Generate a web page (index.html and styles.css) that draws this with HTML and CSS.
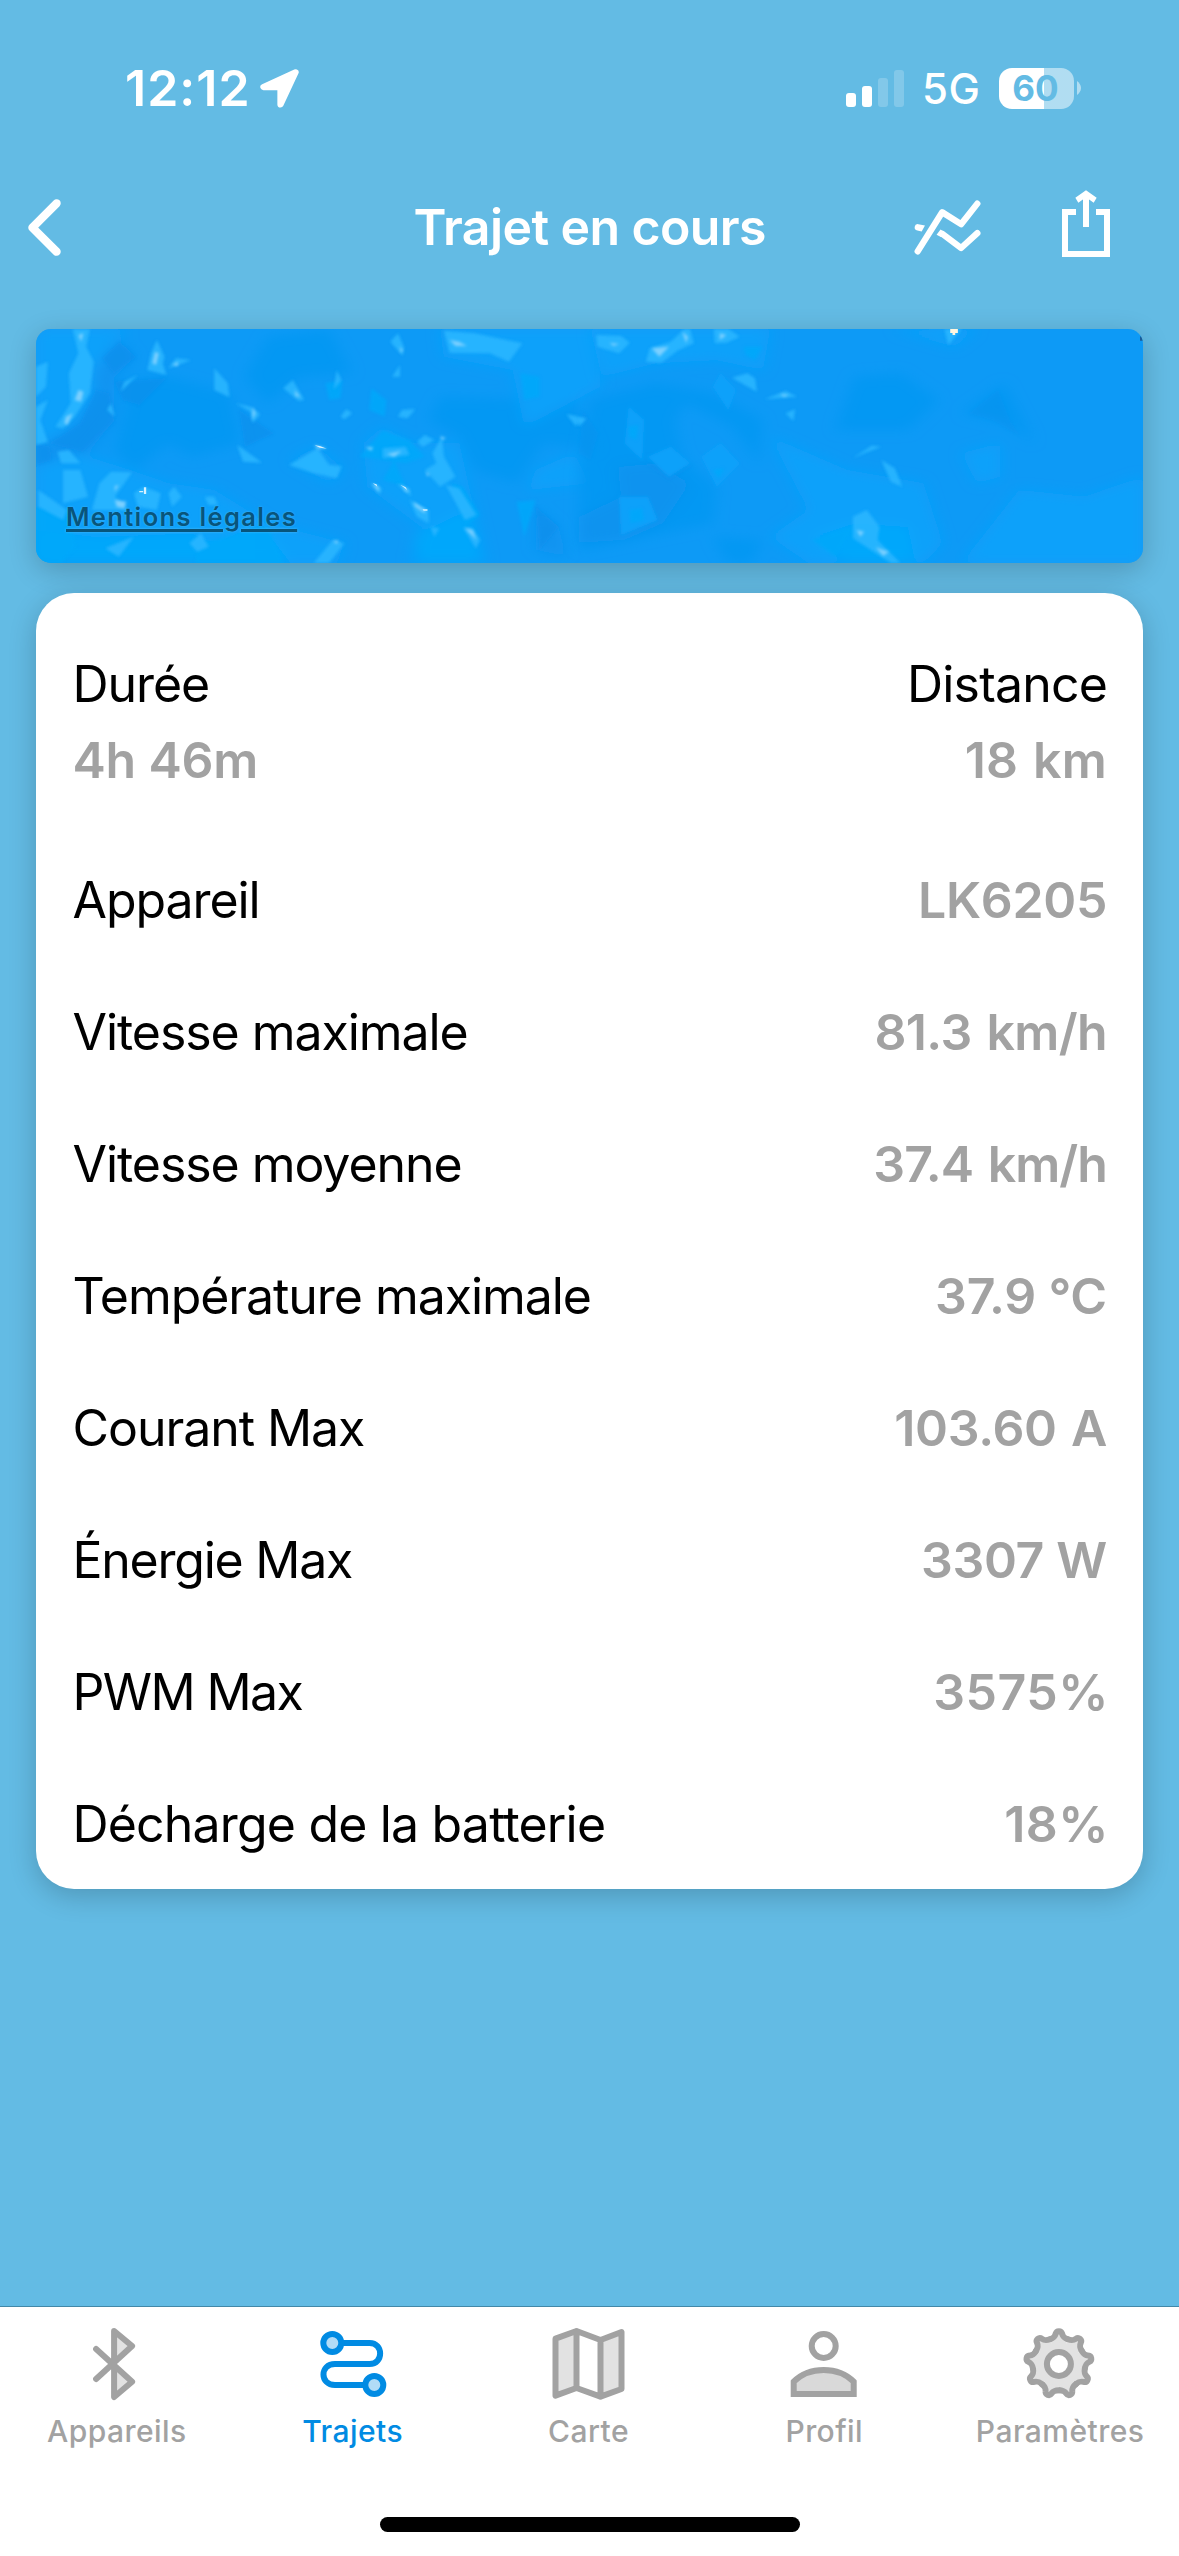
FILE: index.html
```html
<!DOCTYPE html>
<html lang="fr">
<head>
<meta charset="utf-8">
<title>Trajet en cours</title>
<link rel="stylesheet" href="styles.css">
</head>
<body>
<div class="screen">
  <div class="status">
    <div class="status-left">
      <span class="time">12:12</span>
      <svg class="location" viewBox="780 116 118 119"><path d="M888 126 790 171H842V224Z"/></svg>
    </div>
    <div class="status-right">
      <svg class="signal" viewBox="0 0 58 37">
        <rect x="0" y="23" width="10" height="14" rx="3"/>
        <rect x="16" y="16" width="10" height="21" rx="3"/>
        <rect class="dim" x="32" y="8" width="10" height="29" rx="3"/>
        <rect class="dim" x="48" y="0" width="10" height="37" rx="3"/>
      </svg>
      <span class="network">5G</span>
      <div class="battery">
        <div class="battery-body"><span class="battery-text">60</span></div>
        <svg class="battery-nub" viewBox="0 0 4 14"><path d="M0 0C2 1.500 4 4 4 7S2 12.500 0 14Z"/></svg>
      </div>
    </div>
  </div>

  <header class="nav">
    <svg class="back" viewBox="84 504 99 172"><path d="M170 517 97 590.500 170 663"/></svg>
    <h1 class="title">Trajet en cours</h1>
    <div class="actions">
      <svg class="chart" viewBox="344 508 200 166">
        <path class="line" d="M354 663 428 545 485 581 534 519"/>
        <path class="line" d="M428 610 485 653 534 608"/>
        <path class="cut" d="M376 585 366 603 353 600A9.500 9.500 0 0 1 356 581ZM411 613 423 597 436 606 424 620Z"/>
      </svg>
      <svg class="share" viewBox="786 480 144 222">
        <path class="frame" d="M828 546H795V672H921V546H888"/>
        <path class="frame" d="M858 591V500"/>
        <path class="head" d="M858 481 890 503 881 518 858 502 835 518 826 503Z"/>
      </svg>
    </div>
  </header>

  <main class="content">
    <section class="map">
      <svg class="water" viewBox="0 0 1107 234" preserveAspectRatio="none">
        <defs>
          <filter id="soft" x="-20%" y="-20%" width="140%" height="140%"><feGaussianBlur stdDeviation="18"/></filter>
          <filter id="edge" x="-20%" y="-20%" width="140%" height="140%"><feGaussianBlur stdDeviation="4.500"/></filter>
          <filter id="glow" x="-20%" y="-20%" width="140%" height="140%"><feGaussianBlur stdDeviation="4"/></filter>
        </defs>
        <!-- western half of the view -->
        <g transform="translate(-36 -19) scale(.3827 .3333)">
          <g filter="url(#soft)">
            <path class="deep" d="M330 210 440 200 600 250 630 400 500 440 440 400 350 480 300 420 330 300ZM700 80 860 60 920 190 780 200 700 280 640 200ZM1150 260 1500 270 1560 420 1420 400 1350 520 1240 480 1200 380 1120 330Z"/>
            <path class="dark" d="M310 90 355 140 300 200 300 330 230 430 95 460 95 410 150 370 230 280 270 140ZM1400 590 1460 650 1480 740 1400 720Z"/>
            <path class="lite" d="M94 57H330L280 130 240 180 250 260 180 360 94 410ZM94 470 200 430 340 480 440 520 560 540 700 640 900 700 880 759H94ZM760 450 830 410 900 480 860 520ZM950 400 1000 350 1080 400 1200 400 1270 760H1070L1100 650 960 530ZM1150 57H1568V230L1370 350 1340 180 1160 140ZM1400 480 1500 430 1540 520 1380 540Z"/>
            <path class="cyan" d="M94 660 250 680 500 670 560 700 680 640 760 759H94ZM1080 680 1220 600 1260 759H1100Z"/>
          </g>
          <g class="shade" filter="url(#edge)">
            <path d="M312 95 355 142 298 190 268 145ZM250 240 285 250 298 335 215 425 130 400 210 340ZM300 215 435 205 365 285 320 270ZM625 300 715 370 640 410ZM1400 590 1460 650 1410 720ZM94 400 130 410 135 450 94 465Z"/>
          </g>
          <g class="cyan" filter="url(#edge)">
            <path d="M970 235 1010 270 1005 320 965 300ZM1360 190 1410 200 1410 260 1370 270ZM1350 575 1400 570 1370 680ZM850 220 895 210 890 265 860 270ZM94 590 180 600 200 710 160 759H94ZM520 700 700 650 740 759H510ZM940 440 1000 360 1070 390 1110 440 1060 460ZM1000 510 1030 450 1060 530ZM1180 520 1210 530 1255 615 1215 650Z"/>
          </g>
          <g class="bright" filter="url(#edge)">
            <path d="M190 57H235L225 110 245 155 235 250 195 320 165 355 145 350 185 280 180 190 205 130ZM94 170 125 155 120 230 94 260ZM94 290 125 270 105 330 125 395 94 405ZM150 425 180 420 210 460 160 460ZM410 90 430 140 425 160 435 195 385 180 395 130ZM440 175 460 145 500 150ZM315 245 325 215 360 195ZM280 300 290 280 300 320ZM560 175 595 220 600 262 560 240ZM615 280 655 290 680 312 660 340 655 305ZM740 235 765 210 795 270 780 272ZM872 240 880 180 892 210ZM890 320 905 298 920 310 900 328ZM1040 320 1050 300 1085 297 1065 325ZM1025 200 1045 165 1045 200ZM1020 95 1040 70 1055 110 1052 137ZM1160 62 1240 70 1365 100 1330 155 1280 130 1175 128ZM1480 312 1530 325 1505 348ZM620 405 685 458 635 455ZM755 465 830 415 860 465 893 468 880 505 820 490ZM165 480 210 480 230 560 165 580ZM260 520 290 485 345 487 300 560 335 600 240 600ZM350 550 375 530 420 550 410 600 360 590ZM440 550 455 530 475 560 450 590ZM535 560 560 560 570 585 545 585ZM100 540 175 600 165 630 100 590ZM495 700 525 670 545 710 515 725ZM275 715 350 680 310 740ZM870 690 900 700 860 759H820ZM1000 415 1060 410 1070 435 1000 445ZM1090 395 1110 375 1135 390 1105 410ZM1155 380 1160 440 1190 500 1150 530 1110 480 1140 460 1130 430ZM1165 525 1200 535 1245 615 1215 630ZM1070 570 1120 600 1120 640 1090 620ZM970 520 998 535 992 555ZM1035 520 1070 535 1075 560ZM1125 650 1148 655 1135 680ZM1210 652 1235 655 1255 690 1243 715Z"/>
          </g>
          <g class="spark" filter="url(#glow)">
            <path d="M205 75 218 70 212 95ZM205 240 218 245 212 275 195 270ZM172 320 190 310 176 345 168 340ZM405 125 415 130 408 165 398 160ZM450 165 465 155 465 168ZM660 290 668 310 660 330ZM770 240 785 262 772 258ZM1175 90 1200 95 1220 108 1190 108ZM1045 110 1053 120 1048 130ZM300 570 330 575 325 595 305 590ZM820 405 855 415 830 417ZM955 412 975 412 970 422ZM1010 432 1050 422 1030 440ZM970 520 990 530 990 545ZM1045 520 1070 545 1060 545ZM1080 575 1112 600 1110 610 1085 590ZM1150 378 1165 385 1155 390ZM1112 485 1122 492 1118 500ZM1215 655 1235 660 1245 690ZM870 692 885 692 880 702ZM300 528 310 525 300 545Z"/>
          </g>
          <path class="glint" d="M376 532h6v20h-6zM364 543h10v4h-10zM822 406l14 2 18 8-18-3zM974 520l10 3 2 7zM1046 524l14 8 4 8zM1104 598h13v4h-10z"/>
        </g>
        <!-- eastern half of the view -->
        <g transform="translate(543 -19) scale(.3827 .3333)">
          <g filter="url(#soft)">
            <path class="deep" d="M30 270 200 220 350 250 480 330 470 460 400 350 280 280 250 330 270 440 360 530 350 640 0 720V480ZM720 200 840 190 940 270 860 360 670 360ZM1000 310 1110 220 1190 400 1120 340ZM350 680 480 690 450 759H390Z"/>
            <path class="lite" d="M30 57H500L480 180 360 150 200 160 60 200ZM820 57H1040L980 110ZM500 380 700 480 900 520 950 700 900 759H600L500 680 600 600ZM1000 430 1100 400 1100 500 1040 520ZM1150 540 1320 560 1474 500V759H1000Z"/>
            <path class="dark" d="M100 470 200 460 290 520 220 640 120 690 0 700V620L110 560Z"/>
            <path class="cyan" d="M610 680 720 640 860 650 880 759H700Z"/>
          </g>
          <g class="shade faint" filter="url(#edge)">
            <path d="M1020 310 1095 240 1125 330 1150 375 1080 330ZM170 460 300 465 235 512ZM10 300 50 370 30 450 0 430Z"/>
          </g>
          <g class="lite" filter="url(#edge)">
            <path d="M130 290 170 330 165 450 120 400ZM180 440 240 410 290 460 235 500ZM105 560 180 560 205 630 110 675ZM350 230 370 190 410 240 390 300ZM320 440 370 400 420 460 360 530Z"/>
          </g>
          <g class="cyan" filter="url(#edge)">
            <path d="M132 600 165 595 170 630 135 640ZM128 350 155 345 150 390 132 380ZM430 110 480 110 460 150 435 135ZM350 480 380 475 365 505ZM610 690 715 650 670 740Z"/>
          </g>
          <g class="bright" filter="url(#edge)">
            <path d="M45 75 110 78 133 98 105 130 48 110ZM175 155 185 115 240 95 275 57H290L300 100 260 120 215 158ZM352 57H390L420 80 385 98 355 100ZM400 203 440 190 460 205 465 245ZM485 268 540 243 570 260ZM540 310 565 298 560 333ZM715 445 765 407 790 410 755 425ZM790 450 825 475 845 530 815 515ZM716 620 752 600 785 650 780 690 840 759H815L716 685ZM955 57H1000L965 105ZM0 325 20 325 0 350Z"/>
          </g>
          <g class="spark" filter="url(#glow)">
            <path d="M190 115 235 110 210 140ZM270 65 285 80 280 100ZM80 98 105 102 90 108ZM725 660 745 665 735 680ZM775 712 810 725 795 738ZM525 252 550 255 535 260ZM368 70 385 75 368 90Z"/>
          </g>
          <path class="sun" d="M970 57H990V69H983V75H976V69H970Z"/>
          <path class="corner" d="M1466 80 1474 74V92H1466Z"/>
        </g>
      </svg>
      <a class="legal">Mentions légales</a>
    </section>

    <section class="card">
      <div class="summary">
        <div class="stat"><span class="label">Durée</span><span class="value even">4h 46m</span></div>
        <div class="stat end"><span class="label roomy">Distance</span><span class="value wide">18 km</span></div>
      </div>
      <div class="row"><span class="label">Appareil</span><span class="value">LK6205</span></div>
      <div class="row"><span class="label">Vitesse maximale</span><span class="value speed">81.3 km/h</span></div>
      <div class="row"><span class="label">Vitesse moyenne</span><span class="value speed snug">37.4 km/h</span></div>
      <div class="row"><span class="label">Température maximale</span><span class="value even">37.9 °C</span></div>
      <div class="row"><span class="label">Courant Max</span><span class="value amps">103.60 A</span></div>
      <div class="row"><span class="label tight">Énergie Max</span><span class="value">3307 W</span></div>
      <div class="row"><span class="label tighter">PWM Max</span><span class="value percent">3575%</span></div>
      <div class="row"><span class="label roomy">Décharge de la batterie</span><span class="value percent">18%</span></div>
    </section>
  </main>

  <nav class="tabs">
    <div class="tab">
      <svg class="icon" viewBox="227.700 96 252 252">
        <path class="pale" d="M342 123 396 168 342 217ZM342 227 396 275 342 321Z"/>
        <path class="stroke" d="M288 177 396 275 342 321V123L396 168 288 267"/>
      </svg>
      <span class="tab-name">Appareils</span>
    </div>
    <div class="tab active">
      <svg class="icon" viewBox="935.100 96 252 252">
        <path class="stroke" d="M1023 159H1108C1150 159 1150 222 1108 222H1004C958 222 958 285 1004 285H1095"/>
        <circle class="stroke pale" cx="996" cy="159" r="27"/>
        <circle class="stroke pale" cx="1122" cy="285" r="27"/>
      </svg>
      <span class="tab-name">Trajets</span>
    </div>
    <div class="tab">
      <svg class="icon" viewBox="202.500 96 252 252">
        <path class="pale" d="M228 146 291 123V294L228 317ZM363 150 426 126V297L363 320Z"/>
        <path class="stroke" d="M228 146 291 123 363 150 426 126V297L363 320 291 294 228 317ZM291 123V294M363 150V320"/>
      </svg>
      <span class="tab-name">Carte</span>
    </div>
    <div class="tab">
      <svg class="icon" viewBox="9.900 96 252 252">
        <circle class="stroke" cx="132" cy="168" r="36"/>
        <path class="stroke bust" d="M42 312V275C88 228 176 228 222 275V312Z"/>
      </svg>
      <span class="tab-name">Profil</span>
    </div>
    <div class="tab">
      <svg class="icon" viewBox="717.300 96 252 252">
        <defs>
          <g id="tooth">
            <path class="pale" d="M-27-74.200Q-15-78.600-10-91-7-99 0-99T10-91Q15-78.600 27-74.200L0 0Z"/>
            <path class="stroke" d="M-27-74.200C-15-78.600-12-82-9.500-91-7-101 7-101 9.500-91 12-82 15-78.600 27-74.200"/>
          </g>
        </defs>
        <g transform="translate(837 222)">
          <use href="#tooth"/><use href="#tooth" transform="rotate(40)"/><use href="#tooth" transform="rotate(80)"/>
          <use href="#tooth" transform="rotate(120)"/><use href="#tooth" transform="rotate(160)"/><use href="#tooth" transform="rotate(200)"/>
          <use href="#tooth" transform="rotate(240)"/><use href="#tooth" transform="rotate(280)"/><use href="#tooth" transform="rotate(320)"/>
          <circle class="pale" r="66"/>
          <circle class="stroke hub" r="36"/>
        </g>
      </svg>
      <span class="tab-name">Paramètres</span>
    </div>
    <div class="home"></div>
  </nav>
</div>
</body>
</html>
```
FILE: styles.css
```css
* { box-sizing: border-box; }
body { margin: 0; }
svg { display: block; flex: none; }

.screen {
  width: 1179px;
  height: 2556px;
  display: flex;
  flex-direction: column;
  overflow: hidden;
  background: #63bbe4;
  font-family: Inter, "Liberation Sans", sans-serif;
}

/* status bar */
.status {
  height: 176px;
  padding: 0 98px 0 125px;
  display: flex;
  align-items: center;
  justify-content: space-between;
  color: #fff;
}
.status-left, .status-right { display: flex; align-items: center; }
.time { width: 135px; font-size: 50px; font-weight: 600; letter-spacing: 1px; }
.location { width: 39px; height: 39px; fill: #fff; stroke: #fff; stroke-width: 19; stroke-linejoin: round; }
.signal { width: 58px; height: 37px; fill: #fff; }
.dim { opacity: .2; }
.network { width: 58px; margin: 0 19px 0 18px; font-size: 42px; font-weight: 450; letter-spacing: .5px; }
.battery { width: 82px; display: flex; align-items: center; justify-content: space-between; }
.battery-body {
  width: 75px;
  height: 41px;
  padding-right: 2px;
  border-radius: 13px;
  background: linear-gradient(90deg, #fff 45px, rgba(255, 255, 255, .5) 45px);
  display: flex;
  align-items: center;
  justify-content: center;
}
.battery-text { color: #63bbe4; font-size: 35px; font-weight: 700; line-height: 41px; }
.battery-nub { width: 4px; height: 14px; fill: #fff; opacity: .5; }

/* navigation bar */
.nav {
  height: 102px;
  padding: 0 69px 0 28px;
  display: grid;
  grid-template-columns: 385.500px 1fr auto;
  align-items: center;
}
.title { margin: 0; color: #fff; font-size: 50px; font-weight: 600; letter-spacing: -.6px; white-space: nowrap; }
.back { width: 33px; height: 57px; fill: none; stroke: #fff; stroke-width: 25; stroke-linecap: round; stroke-linejoin: round; }
.actions { display: flex; align-items: center; gap: 81px; }
.chart { width: 67px; height: 55px; fill: none; stroke: #fff; }
.line { stroke-width: 19; stroke-linecap: round; stroke-linejoin: round; }
.cut { fill: #fff; stroke: none; }
.share { width: 48px; height: 74px; fill: none; }
.frame { stroke: #fff; stroke-width: 18; }
.head { fill: #fff; }

/* content */
.content {
  flex: 1;
  padding: 51px 36px 0;
  display: flex;
  flex-direction: column;
  gap: 30px;
}
.map, .card { flex: none; box-shadow: 0 7px 28px rgba(0, 0, 0, .2); }
.map { position: relative; height: 234px; border-radius: 15px; overflow: hidden; background: #0d9af6; }
.water { width: 1107px; height: 234px; }
.deep { fill: #0097f1; opacity: .75; }
.dark, .shade { fill: #0e8fec; }
.dark { opacity: .6; }
.shade { opacity: .65; }
.faint { opacity: .3; }
.lite { fill: #0fa1fa; }
.cyan { fill: #03a8fa; opacity: .85; }
.bright { fill: #2ab6ff; opacity: .9; }
.spark { fill: #7dd0ff; }
.glint { fill: #d5f1ff; }
.sun { fill: #fff6e0; }
.corner { fill: #1b5a94; }
.legal {
  position: absolute;
  left: 30px;
  bottom: 28px;
  color: #07557c;
  font-size: 25.500px;
  font-weight: 600;
  line-height: 36px;
  letter-spacing: 1.350px;
  text-decoration: underline;
  text-decoration-thickness: 3px;
  text-underline-offset: 3px;
  text-shadow: 0 0 2px rgba(120, 200, 250, .6);
}

.card {
  height: 1296px;
  padding: 53px 36px 0 36.500px;
  border-radius: 38px;
  background: #fff;
  font-size: 50px;
}
.summary { height: 188px; display: flex; justify-content: space-between; }
.stat { display: flex; flex-direction: column; line-height: 76px; }
.end { align-items: flex-end; }
.row { height: 132px; display: flex; align-items: center; justify-content: space-between; }
.label { color: #000; letter-spacing: -1.060px; }
.tight { letter-spacing: -1.250px; }
.tighter { letter-spacing: -1.600px; }
.roomy { letter-spacing: -.820px; }
.value { color: #a2a2a2; font-weight: 600; letter-spacing: -.330px; }
.speed { letter-spacing: -.650px; word-spacing: 3px; }
.snug { letter-spacing: -.950px; }
.even { letter-spacing: -.200px; }
.wide { letter-spacing: .200px; word-spacing: 2px; }
.amps { word-spacing: 2px; }
.percent { letter-spacing: .500px; margin-right: -2px; }

/* tab bar */
.tabs {
  height: 250px;
  border-top: 1px solid #4388a8;
  background: #fff;
  display: grid;
  grid-template-columns: repeat(5, 1fr);
  grid-template-rows: 210px 15px;
}
.tab {
  --tint: #a2a2a2;
  --pale: #e2e2e2;
  padding-top: 15px;
  display: flex;
  flex-direction: column;
  align-items: center;
  gap: 7px;
  color: var(--tint);
  font-size: 30px;
  font-weight: 500;
  line-height: 36px;
  letter-spacing: .450px;
}
.tab-name { margin-right: 2px; }
.active { --tint: #018be3; --pale: #b2dcf7; }
.icon { width: 84px; height: 84px; }
.stroke { fill: none; stroke: var(--tint); stroke-width: 18; stroke-linecap: round; stroke-linejoin: round; }
.pale { fill: var(--pale); }
.bust { fill: #d9d9d9; stroke-linejoin: miter; }
.hub { fill: #fff; }
.home { grid-column: 1 / -1; justify-self: center; width: 420px; height: 15px; border-radius: 8px; background: #000; }
```
